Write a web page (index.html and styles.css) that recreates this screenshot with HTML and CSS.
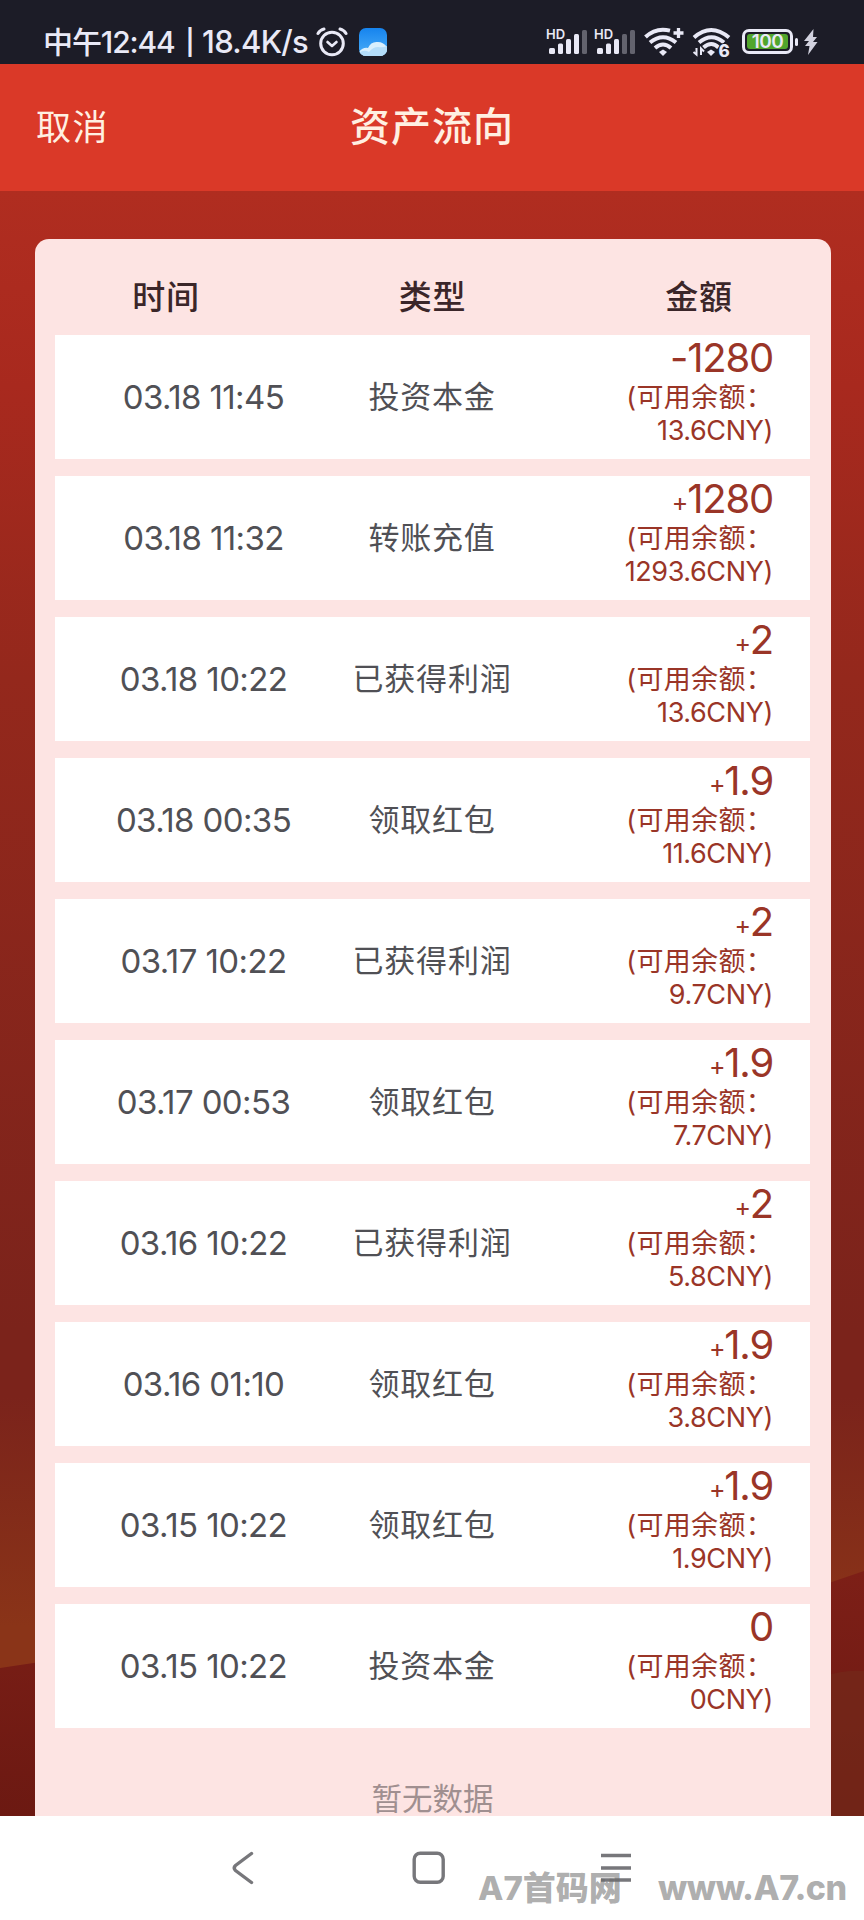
FILE: index.html
```html
<!DOCTYPE html>
<html lang="zh-CN">
<head>
    <meta charset="UTF-8">
    <meta name="viewport" content="width=device-width, initial-scale=1.0">
    <title>资产流向</title>
    <link rel="stylesheet" href="styles.css">
</head>
<body>
    <div class="status-bar">
        <span class="clock">中午12:44</span>
        <span class="divider">|</span>
        <span class="speed">18.4K/s</span>
        <svg class="alarm" width="32" height="30" viewBox="0 0 32 30" fill="none" stroke="#e9e9f6" stroke-linecap="round" stroke-linejoin="round">
            <circle cx="16" cy="16.5" r="11.3" stroke-width="3"/>
            <path d="M11.5 15l4.5 4 4.5-4" stroke-width="2.6"/>
            <path d="M2 6.5Q4 3 8 2M24 2q4 1 6 4.500" stroke-width="3"/>
        </svg>
        <svg class="weather" width="28" height="28" viewBox="0 0 28 28">
            <defs>
                <linearGradient id="sky" x1="0" y1="0" x2="0" y2="1">
                    <stop offset="0" stop-color="#1684ee"/>
                    <stop offset="1" stop-color="#4baef8"/>
                </linearGradient>
                <clipPath id="tile"><rect width="28" height="28" rx="7"/></clipPath>
            </defs>
            <g clip-path="url(#tile)">
                <rect width="28" height="28" fill="url(#sky)"/>
                <path d="M0 24q4-5 9-4 3-7 10-6 5 0 9 5v9H0z" fill="#d9effd"/>
                <path d="M0 25q5-4 10-1 4-5 9-5 5 1 9-1v10H0z" fill="#b4ddfa"/>
            </g>
        </svg>

        <div class="status-icons">
            <div class="signal">
                <span class="hd">HD</span>
                <svg width="40" height="26" viewBox="0 0 40 26" fill="#e9e9f6">
                    <rect x="1" y="19" width="6" height="6" rx="1.500"/>
                    <rect x="10" y="14.500" width="5" height="10.500" rx="1.500"/>
                    <rect x="18" y="10" width="5" height="15" rx="1.500"/>
                    <rect x="26" y="5" width="5" height="20" rx="1.500"/>
                    <rect x="34" y="1" width="5" height="24" rx="1.500" fill="#63636e"/>
                </svg>
            </div>
            <div class="signal">
                <span class="hd">HD</span>
                <svg width="40" height="26" viewBox="0 0 40 26" fill="#e9e9f6">
                    <rect x="1" y="19" width="6" height="6" rx="1.500"/>
                    <rect x="10" y="14.500" width="5" height="10.500" rx="1.500"/>
                    <rect x="18" y="10" width="5" height="15" rx="1.500"/>
                    <rect x="26" y="5" width="5" height="20" rx="1.500" fill="#63636e"/>
                    <rect x="34" y="1" width="5" height="24" rx="1.500" fill="#63636e"/>
                </svg>
            </div>
            <svg class="wifi" width="40" height="30" viewBox="0 0 40 30" fill="none" stroke="#e9e9f6" stroke-width="4">
                <path d="M1.500 10Q12 0 26 3.600"/>
                <path d="M6 15.500q13-10.500 26 0"/>
                <path d="M11 21q8-7 16 0"/>
                <path d="M19 22.500l4 2.500-4 4-4-4z" fill="#e9e9f6" stroke="none"/>
                <path d="M34.500 1v10M29.500 6h10" stroke-width="3.300"/>
            </svg>
            <svg class="wifi" width="40" height="34" viewBox="0 0 40 34" fill="none" stroke="#e9e9f6" stroke-width="4">
                <path d="M2 12.500Q19-2.500 37 12.500"/>
                <path d="M7 17.500q12.500-10.500 25 0"/>
                <path d="M11.500 22.500q8-7 15 0"/>
                <path d="M19 24.500l4 2.500-4 4-4-4z" fill="#e9e9f6" stroke="none"/>
                <path d="M1.500 27l3 2.500V23M9 30v-6.500l3 3" stroke-width="2"/>
                <text x="26.500" y="32" class="wifi-gen">6</text>
            </svg>
            <div class="battery"><span>100</span></div>
            <svg class="bolt" width="14" height="26" viewBox="0 0 14 26" fill="#d2d2df">
                <path d="M9.500 0L0 12h5L1 17h4.500L4 26l9.500-13H9l4-5H9z"/>
            </svg>
        </div>
    </div>

    <header class="nav">
        <a class="cancel">取消</a>
        <h1>资产流向</h1>
    </header>

    <main>
        <svg class="scenery" viewBox="0 0 864 420" preserveAspectRatio="none">
            <defs>
                <linearGradient id="glow" x1="0" y1="0" x2="0" y2="1">
                    <stop offset="0" stop-color="#8a3418" stop-opacity="0"/>
                    <stop offset=".55" stop-color="#8a3418"/>
                </linearGradient>
                <linearGradient id="hill" x1="0" y1="0" x2="0" y2="1">
                    <stop offset="0" stop-color="#7d1f17"/>
                    <stop offset="1" stop-color="#6c1912"/>
                </linearGradient>
            </defs>
            <rect width="864" height="420" fill="url(#glow)"/>
            <path d="M0 272l40-6 780-76 44-15v245H0z" fill="url(#hill)"/>
            <path d="M824 280q20-6 40-5v145h-40z" fill="#74291a" opacity=".7"/>
        </svg>
        <section class="card">
            <div class="head">
                <span>时间</span>
                <span>类型</span>
                <span>金額</span>
            </div>
            <ul class="list">
                <li>
                    <span class="time">03.18 11:45</span>
                    <span class="type">投资本金</span>
                    <div class="amount"><b>-1280</b><p>(可用余额：<br>13.6CNY)</p></div>
                </li>
                <li>
                    <span class="time">03.18 11:32</span>
                    <span class="type">转账充值</span>
                    <div class="amount"><b><i>+</i>1280</b><p>(可用余额：<br>1293.6CNY)</p></div>
                </li>
                <li>
                    <span class="time">03.18 10:22</span>
                    <span class="type">已获得利润</span>
                    <div class="amount"><b><i>+</i>2</b><p>(可用余额：<br>13.6CNY)</p></div>
                </li>
                <li>
                    <span class="time">03.18 00:35</span>
                    <span class="type">领取红包</span>
                    <div class="amount"><b><i>+</i>1.9</b><p>(可用余额：<br>11.6CNY)</p></div>
                </li>
                <li>
                    <span class="time">03.17 10:22</span>
                    <span class="type">已获得利润</span>
                    <div class="amount"><b><i>+</i>2</b><p>(可用余额：<br>9.7CNY)</p></div>
                </li>
                <li>
                    <span class="time">03.17 00:53</span>
                    <span class="type">领取红包</span>
                    <div class="amount"><b><i>+</i>1.9</b><p>(可用余额：<br>7.7CNY)</p></div>
                </li>
                <li>
                    <span class="time">03.16 10:22</span>
                    <span class="type">已获得利润</span>
                    <div class="amount"><b><i>+</i>2</b><p>(可用余额：<br>5.8CNY)</p></div>
                </li>
                <li>
                    <span class="time">03.16 01:10</span>
                    <span class="type">领取红包</span>
                    <div class="amount"><b><i>+</i>1.9</b><p>(可用余额：<br>3.8CNY)</p></div>
                </li>
                <li>
                    <span class="time">03.15 10:22</span>
                    <span class="type">领取红包</span>
                    <div class="amount"><b><i>+</i>1.9</b><p>(可用余额：<br>1.9CNY)</p></div>
                </li>
                <li>
                    <span class="time">03.15 10:22</span>
                    <span class="type">投资本金</span>
                    <div class="amount"><b>0</b><p>(可用余额：<br>0CNY)</p></div>
                </li>
            </ul>
            <div class="empty">暂无数据</div>
        </section>
    </main>

    <footer class="bottom-nav">
        <svg width="22" height="34" viewBox="0 0 22 34" fill="none" stroke="#77777b" stroke-width="3.400" stroke-linecap="round">
            <path d="M19.500 2.500L3.500 14.500q-2.500 2.500 0 5l16 12"/>
        </svg>
        <svg width="34" height="34" viewBox="0 0 34 34" fill="none" stroke="#77777b" stroke-width="3.400">
            <rect x="2.200" y="2.200" width="29" height="29" rx="6"/>
        </svg>
        <svg width="32" height="34" viewBox="0 0 32 34" fill="none" stroke="#77777b" stroke-width="3.600">
            <path d="M1 4.500h30M1 17h30M1 29h30"/>
        </svg>
        <div class="watermark"><span class="wm-name">A7首码网</span><span class="wm-url">www.A7.cn</span></div>
    </footer>
</body>
</html>
```
FILE: styles.css
```css
* {
    box-sizing: border-box;
    margin: 0;
    padding: 0;
}

body {
    width: 864px;
    height: 1920px;
    display: flex;
    flex-direction: column;
    overflow: hidden;
    font-family: Inter, "Noto Sans CJK SC", sans-serif;
    background: #fff;
}

/* status bar */
.status-bar {
    height: 64px;
    padding: 19px 46px 0 43px;
    display: flex;
    align-items: center;
    flex: none;
    background: #1c1c27;
    color: #e9e9f6;
    font-size: 31px;
    font-weight: 500;
    line-height: 42px;
    white-space: nowrap;
}

.clock {
    width: 135px;
    font-size: 30px;
    letter-spacing: -1.1px;
}

.divider {
    width: 24px;
    text-align: center;
    font-size: 25px;
    font-weight: 600;
}

.speed {
    width: 109px;
    letter-spacing: -0.7px;
}

.alarm {
    margin-left: 5px;
}

.weather {
    margin-left: 11px;
}

.status-icons {
    margin-left: auto;
    display: flex;
    align-items: center;
}

.signal {
    position: relative;
    width: 40px;
    height: 26px;
    margin-right: 8px;
}

.signal svg {
    display: block;
}

.hd {
    position: absolute;
    left: -2px;
    top: -2px;
    font-size: 13px;
    font-weight: 600;
    line-height: 14px;
}

.wifi {
    margin-right: 8px;
}

.wifi-gen {
    font: 800 17px Inter, sans-serif;
    fill: #e9e9f6;
    stroke: #1c1c27;
    stroke-width: 2px;
    paint-order: stroke;
}

.battery {
    position: relative;
    width: 51px;
    height: 25px;
    margin-left: 2px;
    padding: 2px;
    border: 3px solid #e9e9f6;
    border-radius: 7px;
}

.battery span {
    display: block;
    height: 15px;
    border-radius: 3px;
    background: #51a52c;
    font-size: 19px;
    font-weight: 600;
    letter-spacing: -0.5px;
    line-height: 15px;
    text-align: center;
}

.battery::after {
    content: '';
    position: absolute;
    right: -8px;
    top: 6px;
    width: 3px;
    height: 8px;
    border-radius: 2px;
    background: #e9e9f6;
}

.bolt {
    margin-left: 11px;
}

/* title bar */
.nav {
    height: 127px;
    flex: none;
    display: grid;
    grid-template-columns: 1fr auto 1fr;
    align-items: center;
    padding: 0 36px 7px;
    background: #da3928;
    color: #fff0e2;
}

.cancel {
    font-size: 35px;
    letter-spacing: 1.5px;
}

.nav h1 {
    font-size: 40px;
    font-weight: 500;
    letter-spacing: 1px;
}

/* page */
main {
    position: relative;
    height: 1625px;
    flex: none;
    padding: 48px 33.5px 0 34.5px;
    overflow: hidden;
    background: linear-gradient(#b02d20, #a8291e 12%, #94281c 30%, #7b231b 70%, #7b231b);
}

.scenery {
    position: absolute;
    left: 0;
    bottom: 0;
    width: 864px;
    height: 420px;
}

.card {
    position: relative;
    height: 1600px;
    border-radius: 14px 14px 0 0;
    background: #fde4e3;
}

.head {
    height: 96px;
    padding: 34px 0 0;
    display: grid;
    grid-template-columns: repeat(3, 266.500px);
    justify-content: center;
    text-align: center;
    color: #3b2629;
    font-size: 33px;
    font-weight: 500;
    letter-spacing: 0.8px;
    line-height: 48px;
}

.list {
    list-style: none;
    display: grid;
    gap: 17px;
    padding: 0 20.5px;
}

.list li {
    height: 124px;
    display: grid;
    grid-template-columns: 297px 160px 1fr;
    align-items: center;
    padding-right: 37px;
    background: #fff;
    color: #505055;
    text-align: center;
    white-space: nowrap;
}

.time {
    font-size: 33px;
    letter-spacing: -0.6px;
}

.type {
    padding-bottom: 6px;
    font-size: 31px;
    letter-spacing: 0.8px;
}

.amount {
    height: 124px;
    text-align: right;
    color: #9a3527;
}

.amount b {
    display: block;
    height: 46px;
    line-height: 45px;
    font-size: 40px;
    font-weight: 400;
    letter-spacing: -1.2px;
}

.amount i {
    font-size: 25px;
    font-style: normal;
    position: relative;
    top: -2px;
}

.amount p {
    font-size: 27px;
    letter-spacing: -0.4px;
    line-height: 33.300px;
}

.amount p::first-line {
    letter-spacing: 0.3px;
}

.empty {
    margin-top: 49px;
    text-align: center;
    color: #a08f90;
    font-size: 30.500px;
    line-height: 44px;
}

/* system navigation */
.bottom-nav {
    position: relative;
    flex: 1;
    display: flex;
    align-items: flex-start;
    padding: 35px 0 0 232px;
    background: #fff;
}

.bottom-nav svg + svg {
    margin-left: 158px;
}

.bottom-nav svg + svg + svg {
    margin-left: 154px;
}

.watermark {
    position: absolute;
    left: 478px;
    top: 54px;
    display: flex;
    color: rgba(105, 105, 105, 0.55);
    font-weight: 800;
    line-height: 36px;
    white-space: nowrap;
}

.wm-name {
    width: 180px;
    font-size: 33px;
}

.wm-url {
    font-size: 34px;
    letter-spacing: -0.5px;
}
```
